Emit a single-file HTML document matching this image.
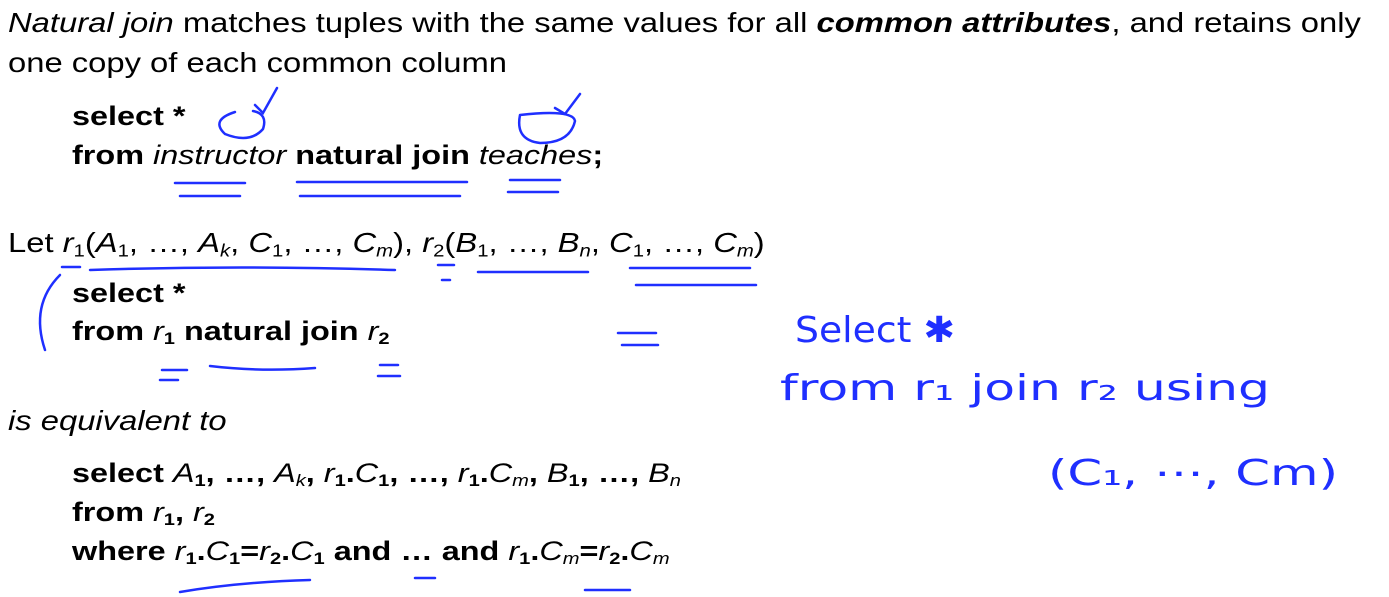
<!DOCTYPE html>
<html><head><meta charset="utf-8">
<style>
body{margin:0;width:1389px;height:597px;background:#fff;overflow:hidden;position:relative;font-family:"Liberation Sans",Arial,sans-serif;color:#000}
.t{position:absolute;white-space:nowrap;font-size:28px;line-height:1;transform:scaleX(1.17);transform-origin:0 0}
.c{position:absolute;white-space:nowrap;font-size:27px;line-height:1;font-weight:bold;left:72px;transform:scaleX(1.2);transform-origin:0 0}
i,em{font-style:italic;font-weight:normal}
sub{font-size:0.62em;vertical-align:-0.25em;line-height:0}
svg{position:absolute;left:0;top:0}
.h{font-family:"DejaVu Sans",sans-serif;fill:#1f2fff;font-size:36px;font-weight:normal}
</style></head><body>
<div class="t" style="left:8px;top:9px"><i>Natural join</i> matches tuples with the same values for all <b><i style="font-weight:bold">common attributes</i></b>, and retains only</div>
<div class="t" style="left:8px;top:49px">one copy of each common column</div>
<div class="c" style="top:103px">select *</div>
<div class="c" style="top:142px">from <i>instructor</i> natural join <i>teaches</i>;</div>
<div class="t" style="left:8px;top:229px">Let <i>r</i><sub>1</sub>(<i>A</i><sub>1</sub>, …, <i>A<sub>k</sub></i>, <i>C</i><sub>1</sub>, …, <i>C<sub>m</sub></i>), <i>r</i><sub>2</sub>(<i>B</i><sub>1</sub>, …, <i>B<sub>n</sub></i>, <i>C</i><sub>1</sub>, …, <i>C<sub>m</sub></i>)</div>
<div class="c" style="top:280px">select *</div>
<div class="c" style="top:318px">from <i>r</i><sub>1</sub> natural join <i>r</i><sub>2</sub></div>
<div class="t" style="left:8px;top:407px"><i>is equivalent to</i></div>
<div class="c" style="top:460px">select <i>A</i><sub>1</sub>, …, <i>A<sub>k</sub></i>, <i>r</i><sub>1</sub>.<i>C</i><sub>1</sub>, …, <i>r</i><sub>1</sub>.<i>C<sub>m</sub></i>, <i>B</i><sub>1</sub>, …, <i>B<sub>n</sub></i></div>
<div class="c" style="top:499px">from <i>r</i><sub>1</sub>, <i>r</i><sub>2</sub></div>
<div class="c" style="top:538px">where <i>r</i><sub>1</sub>.<i>C</i><sub>1</sub>=<i>r</i><sub>2</sub>.<i>C</i><sub>1</sub> and … and <i>r</i><sub>1</sub>.<i>C<sub>m</sub></i>=<i>r</i><sub>2</sub>.<i>C<sub>m</sub></i></div>
<svg width="1389" height="597" fill="none" stroke="#1f2fff" stroke-width="2.5" stroke-linecap="round">
<path d="M235 112 q-25 8 -10 22 q25 10 38 -5 q5 -15 -10 -18"/><path d="M255 105 l8 8 l14 -25"/>
<path d="M520 115 q-5 25 20 28 q30 0 35 -22 q-2 -12 -55 -6"/><path d="M555 108 l10 6 l15 -20"/>
<path d="M175 183 h70 M180 196 h60 M297 182 h170 M300 196 h160 M510 180 h50 M508 192 h50"/>
<path d="M62 267 h18 M90 270 q150 -5 305 0 M438 265 h16 M442 280 h8 M478 272 h110 M630 268 h120 M636 285 h120"/>
<path d="M60 275 q-30 30 -15 75"/>
<path d="M618 333 h38 M622 345 h36"/>
<path d="M162 370 h25 M160 380 h18 M210 366 q50 6 105 2 M380 365 h18 M378 376 h22"/>
<path d="M180 592 q60 -10 130 -12 M415 578 h20 M585 590 h45"/>
<g stroke="none">
<text class="h" x="795" y="342" textLength="160" lengthAdjust="spacingAndGlyphs">Select ✱</text>
<text class="h" x="780" y="400" textLength="490" lengthAdjust="spacingAndGlyphs">from r₁ join r₂ using</text>
<text class="h" x="1048" y="485" textLength="290" lengthAdjust="spacingAndGlyphs">(C₁, ⋯, Cm)</text>
</g>
</svg>
</body></html>
